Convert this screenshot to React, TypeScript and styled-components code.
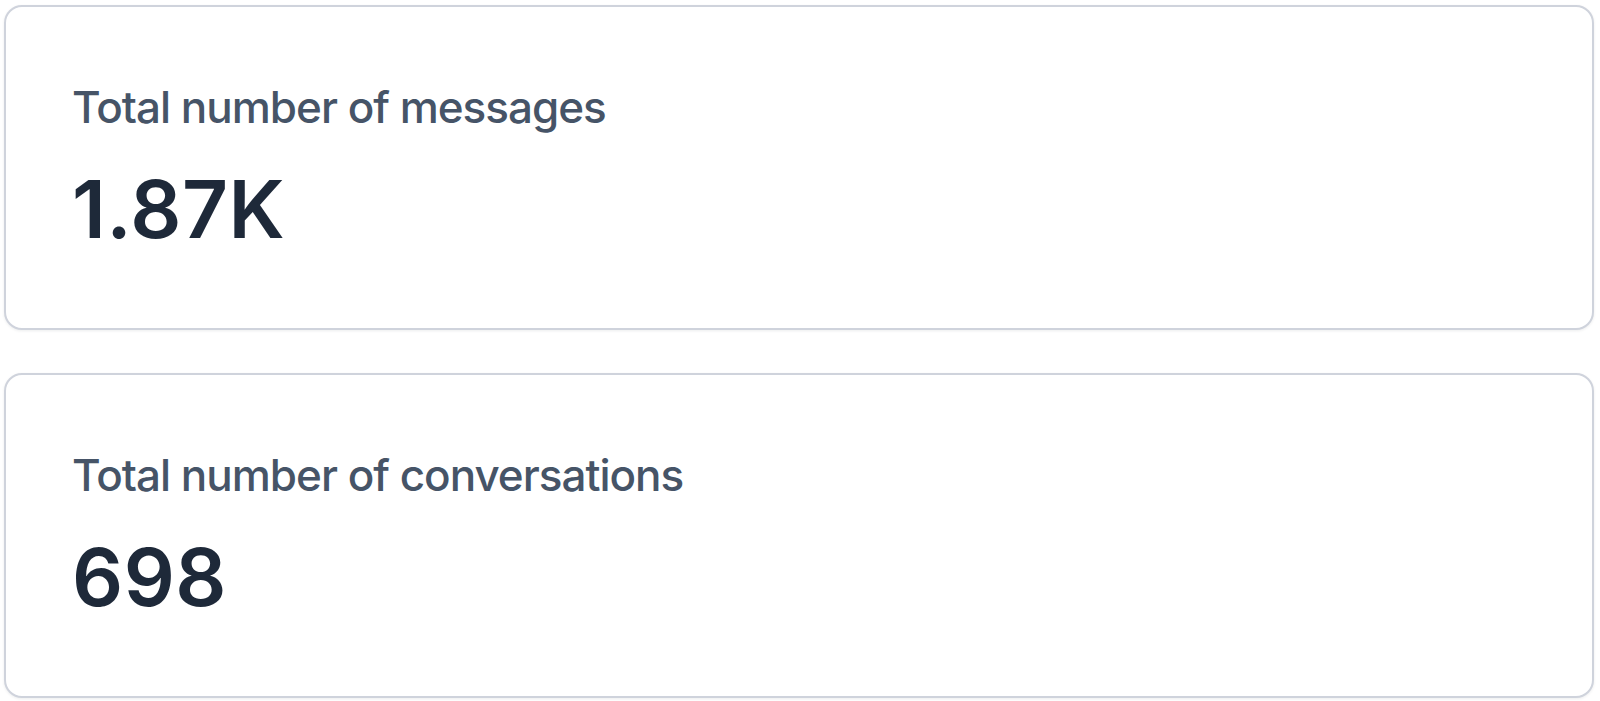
import * as React from 'react';
import styled, { createGlobalStyle } from 'styled-components';

const GlobalStyle = createGlobalStyle`
  html, body {
    margin: 0;
    padding: 0;
    background: #ffffff;
  }
  body {
    font-family: Inter, "Noto Sans", "Liberation Sans", sans-serif;
    -webkit-font-smoothing: antialiased;
  }
`;

type Stat = {
  label: string,
  value: string,
};

const STATS: Stat[] = [
  { label: 'Total number of messages', value: '1.87K' },
  { label: 'Total number of conversations', value: '698' },
];

const Page = styled.div`
  display: flex;
  flex-direction: column;
  gap: 43px;
  padding: 5px 6px 6px 4px;
`;

const Card = styled.section`
  display: flex;
  flex-direction: column;
  gap: 32px;
  padding: 74px 66px 75px;
  border: 2px solid #cfd3dc;
  border-radius: 18px;
  background: #ffffff;
  box-shadow: 0 1px 3px rgba(16, 24, 40, 0.08);
`;

const Label = styled.div`
  font-size: 44px;
  line-height: 52px;
  font-weight: 500;
  color: #465467;
  letter-spacing: -1px;
`;

const Value = styled.div`
  font-size: 80px;
  line-height: 88px;
  font-weight: 600;
  color: #1e2939;
  letter-spacing: 0.5px;
`;

const StatCard: React.FC<Stat> = ({ label, value }: Stat) => (
  <Card>
    <Label>{label}</Label>
    <Value>{value}</Value>
  </Card>
);

const App: React.FC = () => (
  <>
    <GlobalStyle />
    <Page>
      {STATS.map((stat) => (
        <StatCard key={stat.label} label={stat.label} value={stat.value} />
      ))}
    </Page>
  </>
);

export default App;
